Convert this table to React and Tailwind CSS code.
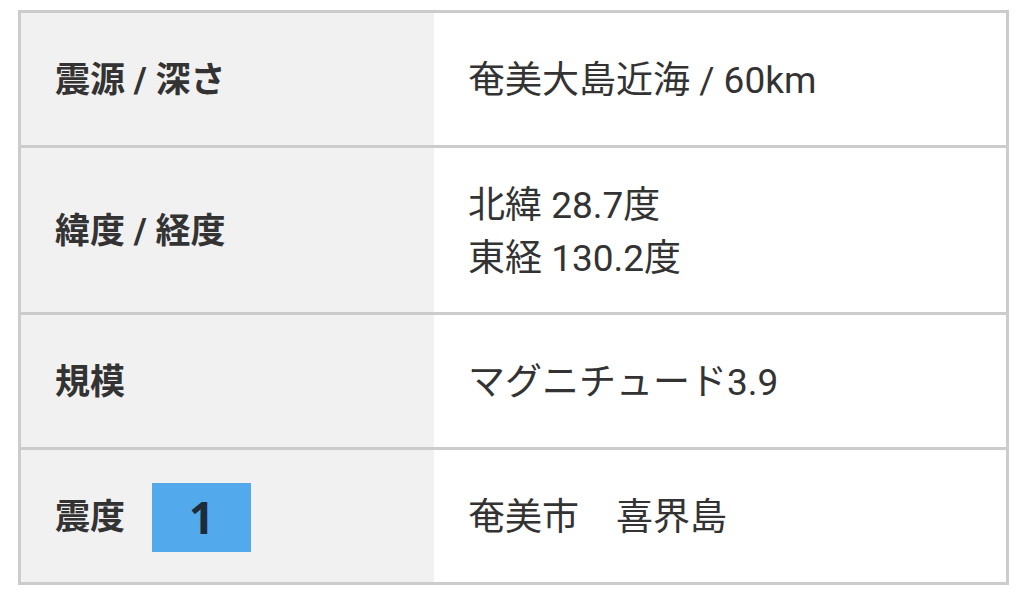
import React from 'react';

const FONT = "font-['Roboto','Noto_Sans_CJK_JP',sans-serif]";

const ROWS = [
  { label: '震源 / 深さ', value: ['奄美大島近海 / 60km'], h: 'h-[132px]' },
  { label: '緯度 / 経度', value: ['北緯 28.7度', '東経 130.2度'], h: 'h-[167px]' },
  { label: '規模', value: ['マグニチュード3.9'], h: 'h-[135px]' },
  { label: '震度', value: ['奄美市　喜界島'], h: 'h-[135px]', badge: '1' },
];

export default function App() {
  return (
    <div className={`w-[1023px] h-[601px] bg-white pt-[10px] pl-[18px] ${FONT}`}>
      <div className="w-[991px] border-[3px] border-[#cccccc] flex flex-col">
        {ROWS.map((row, i) => (
          <div
            key={row.label}
            className={`flex ${row.h} ${i > 0 ? 'border-t-[3px] border-[#cccccc]' : ''}`}
          >
            <div className="w-[413px] shrink-0 bg-[#f1f1f1] flex items-center pl-[34px] gap-[27px] pt-[2px]">
              <span className="text-[35px] font-bold text-[#333333] leading-none">{row.label}</span>
              {row.badge && (
                <span className="w-[99px] h-[69px] bg-[#52a9ec] flex items-center justify-center text-[44px] font-bold text-[#1e2b38] font-['Open_Sans',sans-serif] leading-none">
                  {row.badge}
                </span>
              )}
            </div>
            <div className="flex-1 flex flex-col justify-center pl-[34px] pt-[3px] text-[37px] text-[#333333] leading-[53px]">
              {row.value.map((v) => (
                <div key={v}>{v}</div>
              ))}
            </div>
          </div>
        ))}
      </div>
    </div>
  );
}
